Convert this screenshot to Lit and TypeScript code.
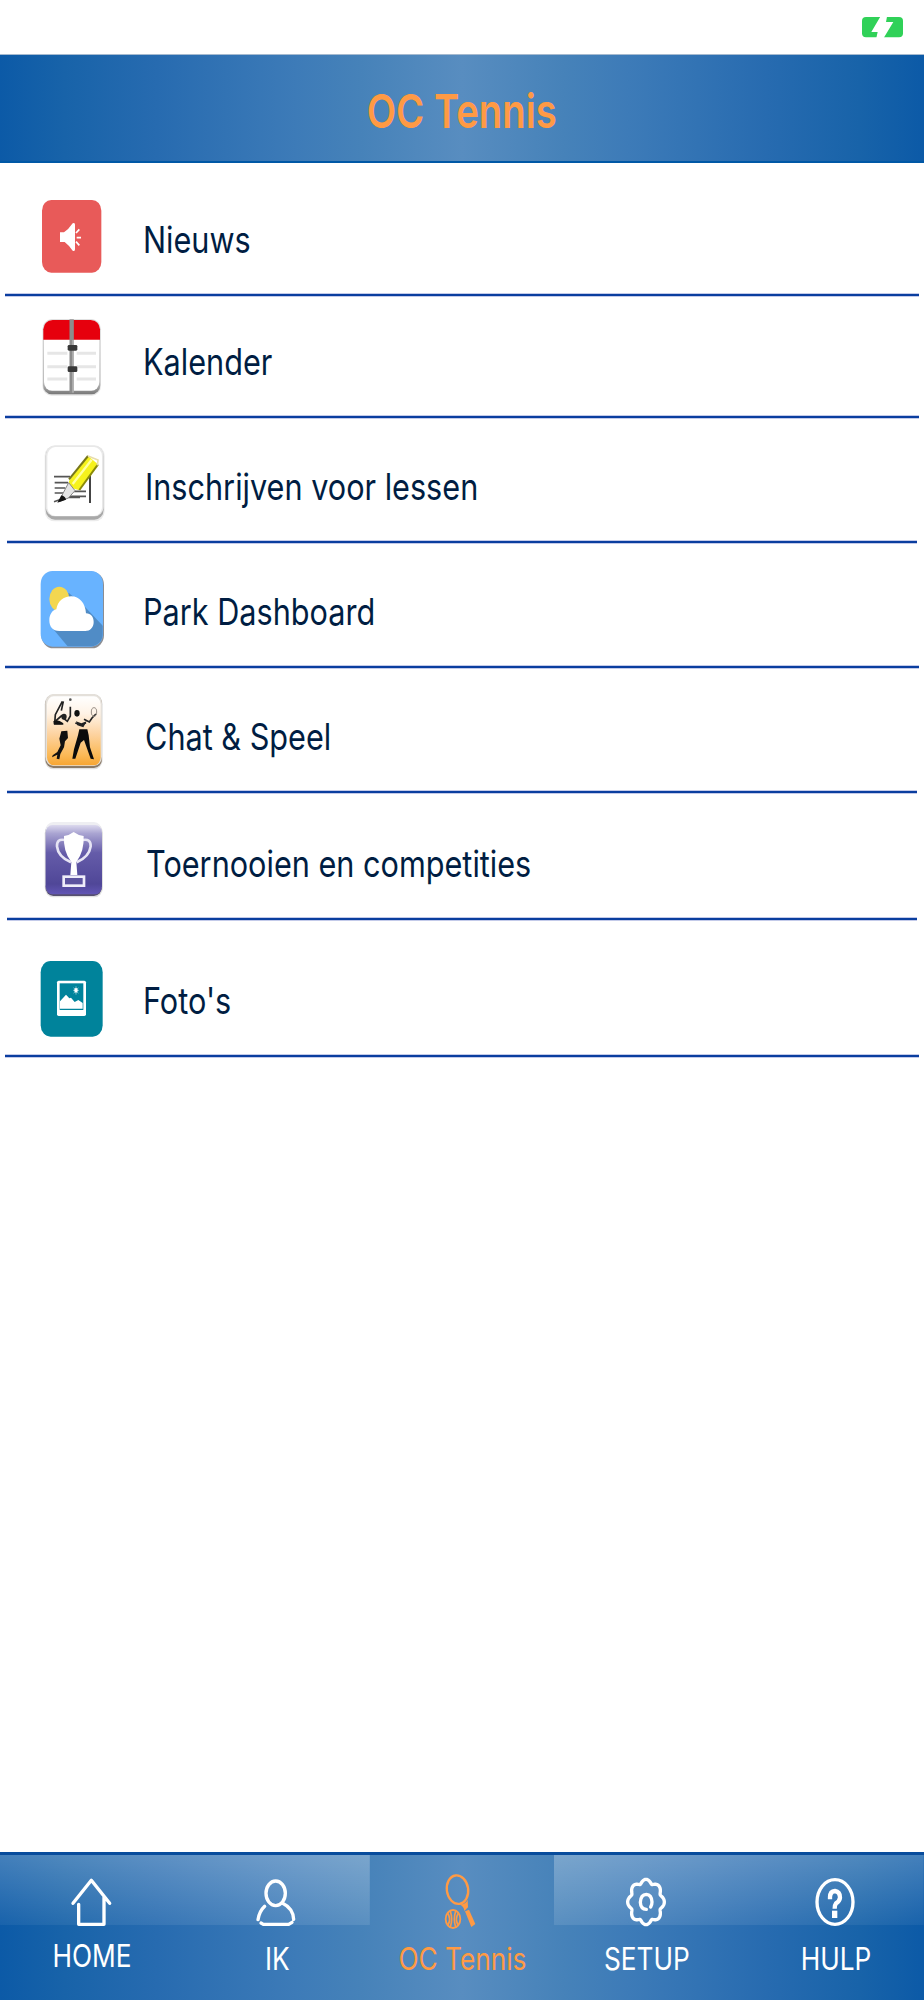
import { LitElement, html, css, svg, nothing, TemplateResult } from 'lit';
import { customElement, property, state } from 'lit/decorators.js';
import { classMap } from 'lit/directives/class-map.js';
import { styleMap } from 'lit/directives/style-map.js';

type Icon = { viewBox: string; body: TemplateResult };

// Outline with eight round lobes
const gearPath = (cx: number, cy: number, rx: number, ry: number) => {
  const points: string[] = [];
  for (let i = 0; i < 160; i++) {
    const a = (i / 160) * Math.PI * 2;
    const r = 0.79 + 0.205 * Math.sqrt(Math.cos(4 * a) ** 2 + 0.05);
    points.push(`${(cx + rx * r * Math.cos(a)).toFixed(1)} ${(cy + ry * r * Math.sin(a)).toFixed(1)}`);
  }
  return `M${points.join('L')}Z`;
};

const icons: Record<string, Icon> = {
  news: {
    viewBox: '114 138 210 252',
    body: svg`
      <rect x="126" y="150" width="178" height="218" rx="28" ry="32" fill="#e85a59" />
      <path d="M180 247H192Q206 238 218 220Q225 216 225 224V298Q225 306 218 302Q206 285 194 276H180Z" fill="#fff" />
      <path d="M228 249L238 238M230 263H243M228 275L238 286" stroke="#fff" stroke-width="5" fill="none" />
    `,
  },
  calendar: {
    viewBox: '114 504 210 252',
    body: svg`
      <defs>
        <linearGradient id="edge" x1="0" y1="0" x2="0" y2="1">
          <stop offset="0" stop-color="#ddd" /><stop offset=".85" stop-color="#bbb" /><stop offset="1" stop-color="#777" />
        </linearGradient>
      </defs>
      <rect x="127" y="508" width="176" height="229" rx="28" ry="30" fill="#000" opacity=".1" />
      <rect x="129" y="508" width="172" height="225" rx="26" ry="28" fill="url(#edge)" />
      <rect x="132" y="510" width="166" height="212" rx="24" ry="26" fill="#fff" />
      <path d="M130 569V538Q132 512 158 510H272Q298 512 300 538V569Z" fill="#e6000d" />
      <path d="M142 610H202M230 610H288M142 650H202M230 650H288M142 687H202M230 687H288" stroke="#e6e6e6" stroke-width="9" />
      <path d="M215 508V730" stroke="#8c8c8c" stroke-width="13" />
      <path d="M219 570V728" stroke="#c8c8c8" stroke-width="3" />
      <rect x="203" y="585" width="29" height="17" rx="4" fill="#383838" />
      <rect x="203" y="649" width="29" height="17" rx="4" fill="#383838" />
    `,
  },
  lessons: {
    viewBox: '114 99 210 252',
    body: svg`
      <rect x="134" y="107" width="180" height="227" rx="30" fill="#000" opacity=".08" />
      <rect x="137" y="108" width="174" height="221" rx="28" ry="30" fill="#a8a8a8" />
      <rect x="137" y="106" width="174" height="213" rx="28" ry="30" fill="#e8e8e8" />
      <rect x="142" y="111" width="164" height="207" rx="24" ry="28" fill="#fff" />
      <path d="M162 200H210M164 218H204M164 234H196M164 249H190M214 244H258M202 259H258M162 275L200 262H240" stroke="#555" stroke-width="5" fill="none" />
      <path d="M270 198V279" stroke="#444" stroke-width="6" />
      <path d="M264 138L207 213L206 232L236 240L294 163Z" fill="#f6f21c" />
      <path d="M264 138L207 208" stroke="#77771a" stroke-width="6" />
      <path d="M275 149L218 222" stroke="#ffffa0" stroke-width="7" />
      <path d="M294 163L238 240" stroke="#8a8a08" stroke-width="6" />
      <path d="M264 138L294 150L292 166" stroke="#e8ddaa" stroke-width="5" fill="none" />
      <path d="M206 218L188 252L180 274L205 264L225 242Z" fill="#e4e4e4" stroke="#888" stroke-width="3" />
      <path d="M184 256Q197 260 198 269L172 278Z" fill="#111" />
    `,
  },
  weather: {
    viewBox: '114 474 210 252',
    body: svg`
      <defs><clipPath id="tile"><rect x="123" y="485" width="185" height="224" rx="34" ry="38" /></clipPath></defs>
      <rect x="124" y="485" width="188" height="230" rx="36" ry="40" fill="#8b8d92" />
      <rect x="122" y="483" width="187" height="227" rx="35" ry="39" fill="#68b3ff" />
      <path d="M155 652L204 710H310V649L258 594L206 548Z" fill="#508cc6" clip-path="url(#tile)" />
      <ellipse cx="178" cy="567" rx="30" ry="37" fill="#f3d750" />
      <path d="M178 663C158 663 148 650 148 631C148 613 157 601 169 598C173 574 190 559 214 559C238 559 256 579 258 610C273 611 281 621 281 636C281 653 270 663 256 663Z" fill="#fff" />
    `,
  },
  players: {
    viewBox: '114 99 210 252',
    body: svg`
      <defs>
        <linearGradient id="sunset" x1="0" y1="0" x2="0" y2="1">
          <stop offset="0" stop-color="#fff" /><stop offset=".25" stop-color="#fff3e6" />
          <stop offset=".55" stop-color="#fdd3a0" /><stop offset=".85" stop-color="#fbb957" /><stop offset="1" stop-color="#f7a531" />
        </linearGradient>
      </defs>
      <rect x="134" y="103" width="174" height="225" rx="26" ry="30" fill="#000" opacity=".12" />
      <rect x="136" y="104" width="170" height="220" rx="24" ry="28" fill="#8b7a66" />
      <rect x="136" y="102" width="170" height="216" rx="24" ry="28" fill="#e4e0da" />
      <rect x="141" y="109" width="161" height="207" rx="20" ry="24" fill="url(#sunset)" />
      <g fill="none" stroke="#222" stroke-width="5">
        <path d="M187 124L166 164L164 190H185M190 124L184 152M168 182L184 168M211 140V168L202 184L192 176L184 165" />
        <path d="M226 189L244 195L258 188M252 178L268 186L276 174L288 162" />
        <ellipse cx="282" cy="156" rx="8" ry="13" stroke="#998f86" stroke-width="3" />
      </g>
      <path d="M160 184Q172 176 190 190V194H162Z" fill="#111" />
      <path d="M228 184L244 190L260 184L250 202L232 196Z" fill="#222" />
      <ellipse cx="192" cy="170" rx="8" ry="9" fill="#222" />
      <ellipse cx="231" cy="160" rx="8" ry="10" fill="#111" />
      <circle cx="211" cy="119" r="4" fill="#555" />
      <path d="M184 214L202 212L204 234L195 244L192 262L181 282L178 298L170 296L172 284L156 292L158 286L172 276L182 256L178 236Z" fill="#111" />
      <path d="M238 208H262L266 226L270 262L282 298L272 296L252 240L242 248L226 296H217L222 268L234 226Z" fill="#0b0b0b" />
    `,
  },
  trophy: {
    viewBox: '114 480 210 252',
    body: svg`
      <defs>
        <linearGradient id="violet" x1="0" y1="0" x2="0" y2="1">
          <stop offset="0" stop-color="#dcd9ee" /><stop offset=".12" stop-color="#aaa5d2" />
          <stop offset=".4" stop-color="#655ca9" /><stop offset=".85" stop-color="#504798" /><stop offset="1" stop-color="#6255b5" />
        </linearGradient>
      </defs>
      <rect x="134" y="490" width="175" height="222" rx="26" ry="30" fill="#000" opacity=".12" />
      <rect x="136" y="490" width="170" height="218" rx="24" ry="28" fill="#565070" />
      <rect x="136" y="486" width="170" height="216" rx="24" ry="28" fill="#eeeef2" />
      <rect x="137" y="495" width="169" height="208" rx="20" ry="24" fill="url(#violet)" />
      <path d="M194 540Q170 535 171 559Q174 590 213 607M248 540Q273 535 272 559Q268 590 230 607" fill="none" stroke="#e6e4f4" stroke-width="8" />
      <path d="M192 528Q208 526 221 516Q234 526 251 528Q253 575 229 606L232 645H211L214 606Q189 575 192 528Z" fill="#fff" />
      <rect x="191" y="650" width="61" height="27" fill="#5c539f" stroke="#efedf9" stroke-width="8" />
    `,
  },
  photos: {
    viewBox: '114 78 210 252',
    body: svg`
      <rect x="122" y="90" width="186" height="227" rx="30" ry="34" fill="#00839b" />
      <rect x="171" y="149" width="87" height="106" rx="5" fill="#fff" />
      <rect x="179" y="157" width="71" height="80" fill="#00839b" />
      <path d="M180 233V211L198 191L208 202L213 200L224 213L235 207L248 216V233Z" fill="#fff" />
      <path d="M228 166V191M219 178H237M221 170L235 187M235 170L221 187" stroke="#b9e0e6" stroke-width="2" />
      <ellipse cx="228" cy="178" rx="5" ry="7" fill="#fff" />
    `,
  },
  home: {
    viewBox: '187 96 180 180',
    body: svg`<path d="M220 190L275 121L330 190M237 193V253H313V172" />`,
  },
  user: {
    viewBox: '742 96 180 180',
    body: svg`
      <ellipse cx="828" cy="160" rx="29" ry="37" />
      <path d="M795 199Q779 214 775 239M784 249L791 253H867L877 247M882 238Q880 205 849 190" />
    `,
  },
  racket: {
    viewBox: '216 96 180 180',
    body: svg`
      <ellipse cx="292.500" cy="149" rx="32" ry="43" transform="rotate(-8 292.500 149)" stroke-width="7" />
      <path d="M298 193Q317 194 323 179L324 202L313 213Q312 199 298 193Z" fill="currentColor" stroke="none" />
      <path d="M315 214L327 209L346 252L334 261Z" fill="currentColor" stroke="none" />
      <ellipse cx="279" cy="237" rx="22" ry="27" stroke-width="5.500" />
      <path d="M264 221Q273 237 265 253M294 221Q285 237 293 253" stroke-width="5" />
      <path d="M271 214Q279 237 271 261M287 214Q279 237 287 261" stroke-width="5" />
    `,
  },
  gear: {
    viewBox: '200 96 180 180',
    body: svg`
      <path d="${gearPath(287, 186, 55, 68)}" />
      <path d="M288 208Q271 207 270 187Q271 164 288 163Q304 164 305 186Q305 195 301 201" />
    `,
  },
  help: {
    viewBox: '767 96 180 180',
    body: svg`
      <ellipse cx="854" cy="186" rx="54" ry="67" />
      <path d="M839 178V172Q839 154 854 153Q869 155 869 173Q868 183 857 190Q853 195 853 206" stroke-width="13" stroke-linecap="butt" />
      <path d="M853 212V234" stroke-width="16" stroke-linecap="butt" />
    `,
  },
};

const drawIcon = (name: string) => html`
  <svg class="icon" viewBox=${icons[name].viewBox} aria-hidden="true">${icons[name].body}</svg>
`;

interface MenuEntry {
  icon: string;
  label: string;
  height: number;
  inset: number;
  indent: number;
}

@customElement('menu-row')
export class MenuRow extends LitElement {
  @property({ type: Object }) entry!: MenuEntry;

  static styles = css`
    :host {
      display: block;
    }

    .row {
      box-sizing: border-box;
      display: flex;
      flex-direction: column;
      justify-content: flex-end;
    }

    .content {
      display: flex;
      align-items: flex-start;
      height: 97px;
      padding-left: 38px;
    }

    .icon {
      width: 70px;
      height: 84px;
      flex-shrink: 0;
    }

    .label {
      font-size: 37px;
      line-height: 44px;
      padding-top: 22px;
      color: #001d42;
      white-space: nowrap;
      transform: scaleX(0.828);
      transform-origin: left;
    }

    .line {
      height: 4px;
      background: linear-gradient(#c3cae9 25%, #0a3e9f 25%, #0a3e9f 75%, #c3cae9 75%);
    }
  `;

  render() {
    const { icon, label, height, inset, indent } = this.entry;
    return html`
      <div class="row" style=${styleMap({ height: `${height}px` })}>
        <div class="content">
          ${drawIcon(icon)}
          <span class="label" style=${styleMap({ marginLeft: `${indent}px` })}>${label}</span>
        </div>
        <div class="line" style=${styleMap({ margin: `0 ${inset}px` })}></div>
      </div>
    `;
  }
}

@customElement('tab-item')
export class TabItem extends LitElement {
  @property() icon = '';
  @property() label = '';
  @property({ type: Boolean }) active = false;

  static styles = css`
    :host {
      display: block;
      flex: 1;
    }

    .tab {
      height: 145px;
      display: flex;
      flex-direction: column;
      align-items: center;
      color: #fff;
      background: linear-gradient(183deg, rgba(255, 255, 255, 0.28), rgba(255, 255, 255, 0.05)) 0 0 / 200% 70px no-repeat;
    }

    .tab.user {
      background-position: 100% 0;
    }

    .tab.gear,
    .tab.help {
      background-image: linear-gradient(177deg, rgba(255, 255, 255, 0.28), rgba(255, 255, 255, 0.05));
    }

    .tab.help {
      background-position: 100% 0;
      padding-left: 8px;
    }

    .tab.active {
      color: #ff9a44;
      background: none;
    }

    .icon {
      width: 60px;
      height: 60px;
      margin-top: 17px;
      fill: none;
      stroke: currentColor;
      stroke-width: 10px;
      stroke-linecap: round;
      stroke-linejoin: round;
    }

    .label {
      font-size: 30.5px;
      line-height: 36px;
      margin-top: 9px;
      white-space: nowrap;
      transform: scaleX(0.86);
    }

    .home .label {
      margin-top: 6px;
    }
  `;

  render() {
    return html`
      <div class=${classMap({ tab: true, active: this.active, [this.icon]: true })}>
        ${this.icon ? drawIcon(this.icon) : nothing}
        <span class="label">${this.label}</span>
      </div>
    `;
  }
}

@customElement('app-root')
export class AppRoot extends LitElement {
  @state() private selected = 'racket';

  private entries: MenuEntry[] = [
    { icon: 'news', label: 'Nieuws', height: 134, inset: 5, indent: 34.5 },
    { icon: 'calendar', label: 'Kalender', height: 122, inset: 5, indent: 34.5 },
    { icon: 'lessons', label: 'Inschrijven voor lessen', height: 125, inset: 7, indent: 37 },
    { icon: 'weather', label: 'Park Dashboard', height: 125, inset: 5, indent: 34.5 },
    { icon: 'players', label: 'Chat & Speel', height: 125, inset: 7, indent: 37 },
    { icon: 'trophy', label: 'Toernooien en competities', height: 127, inset: 7, indent: 38 },
    { icon: 'photos', label: "Foto's", height: 137, inset: 5, indent: 34.5 },
  ];

  private tabs = [
    { icon: 'home', label: 'HOME' },
    { icon: 'user', label: 'IK' },
    { icon: 'racket', label: 'OC Tennis' },
    { icon: 'gear', label: 'SETUP' },
    { icon: 'help', label: 'HULP' },
  ];

  static styles = css`
    :host {
      display: flex;
      flex-direction: column;
      height: 2000px;
      background: #fff;
      font-family: Inter, 'Liberation Sans', sans-serif;
      --bar: linear-gradient(
        90deg,
        #0c5aa7 0%,
        #1863a9 7%,
        #276bb0 17%,
        #3d7bb8 32%,
        #4682b9 39%,
        #588dc0 50%,
        #4682b9 61%,
        #3d7bb8 68%,
        #276bb0 83%,
        #1863a9 93%,
        #0c5aa7 100%
      );
    }

    .status {
      height: 54px;
      box-sizing: border-box;
      display: flex;
      justify-content: flex-end;
      padding: 17px 21px 0 0;
    }

    .battery {
      width: 41px;
      height: 21px;
    }

    .header {
      height: 109px;
      box-sizing: border-box;
      border-top: 1px solid #a5bad0;
      border-bottom: 2px solid #0058a6;
      background: var(--bar) border-box;
      display: flex;
      justify-content: center;
    }

    .title {
      margin: 0;
      padding-top: 27px;
      font-size: 47px;
      line-height: 57px;
      font-weight: 600;
      color: #ff9a44;
      white-space: nowrap;
      transform: scaleX(0.814);
    }

    .list {
      flex: 1;
    }

    .tabbar {
      display: flex;
      height: 148px;
      box-sizing: border-box;
      border-top: 3px solid #084c9c;
      background: var(--bar) border-box;
    }
  `;

  render() {
    return html`
      <div class="status">
        <svg class="battery" viewBox="66 51 123 63" aria-hidden="true">
          <rect x="66" y="51" width="123" height="61" rx="12" fill="#30d158" />
          <path d="M121 50H141L138 66H160L131 114H109L113 96H94Z" fill="#fff" />
        </svg>
      </div>
      <header class="header"><h1 class="title">OC Tennis</h1></header>
      <main class="list">
        ${this.entries.map((entry) => html`<menu-row .entry=${entry}></menu-row>`)}
      </main>
      <nav class="tabbar">
        ${this.tabs.map(
          (tab) => html`
            <tab-item
              .icon=${tab.icon}
              .label=${tab.label}
              ?active=${tab.icon === this.selected}
              @click=${() => (this.selected = tab.icon)}
            ></tab-item>
          `
        )}
      </nav>
    `;
  }
}
